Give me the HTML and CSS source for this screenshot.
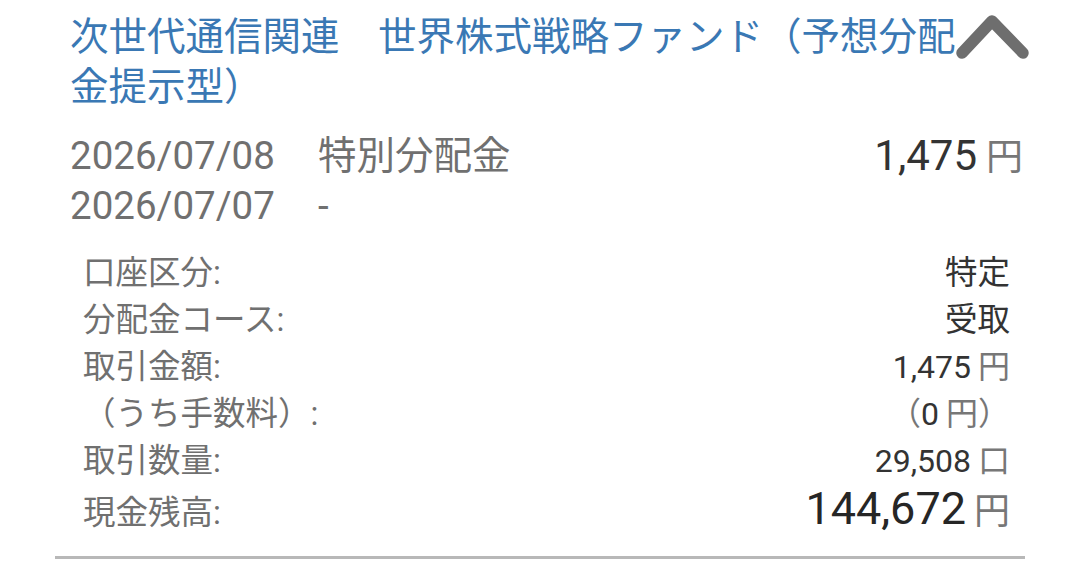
FILE: index.html
```html
<!DOCTYPE html>
<html lang="ja">
<head>
<meta charset="utf-8">
<title>分配金履歴</title>
<link rel="stylesheet" href="styles.css">
</head>
<body>
  <section class="item">
    <h2 class="fund-name">次世代通信関連　世界株式戦略ファンド（予想分配金提示型）</h2>
    <button class="toggle" type="button" aria-label="閉じる">
      <svg viewBox="0 0 80 55" width="80" height="55">
        <path d="M11 44 L41 12 L72 44" fill="none" stroke="#6e6e6e" stroke-width="11.5" stroke-linecap="round" stroke-linejoin="round"/>
      </svg>
    </button>

    <div class="summary">
      <span class="date">2026/07/08</span>
      <span class="kind">特別分配金</span>
      <span class="amount">1,475<span class="unit">円</span></span>
      <span class="date">2026/07/07</span>
      <span class="kind">-</span>
      <span></span>
    </div>

    <dl class="details">
      <div class="row"><dt>口座区分:</dt><dd>特定</dd></div>
      <div class="row"><dt>分配金コース:</dt><dd>受取</dd></div>
      <div class="row"><dt>取引金額:</dt><dd class="num">1,475<span class="unit">円</span></dd></div>
      <div class="row"><dt>（うち手数料）:</dt><dd class="num"><span class="paren">（</span>0<span class="unit">円</span><span class="paren">）</span></dd></div>
      <div class="row"><dt>取引数量:</dt><dd class="num">29,508<span class="unit">口</span></dd></div>
      <div class="row"><dt>現金残高:</dt><dd class="num big">144,672<span class="unit">円</span></dd></div>
    </dl>
  </section>
</body>
</html>
```

FILE: styles.css
```css
html, body {
  margin: 0;
  padding: 0;
  background: #ffffff;
}

body {
  font-family: Roboto, "Noto Sans CJK JP", sans-serif;
  color: #707070;
  width: 1080px;
  height: 570px;
  overflow: hidden;
}

.item {
  position: relative;
  margin: 0 55px;
  padding: 12px 2px 24px 15px;
  border-bottom: 3px solid #b8b8b8;
}

.fund-name {
  margin: 0;
  width: 900px;
  font-size: 38.5px;
  font-weight: 400;
  line-height: 50px;
  color: #3a78b4;
}

.toggle {
  position: absolute;
  top: 9px;
  right: -6px;
  padding: 0;
  border: 0;
  background: transparent;
  line-height: 0;
}

.summary {
  display: grid;
  grid-template-columns: auto auto 1fr;
  column-gap: 43px;
  margin-top: 20px;
  font-size: 38.5px;
  line-height: 48px;
  color: #707070;
}

.summary .amount {
  justify-self: end;
  color: #333333;
  font-size: 42px;
}

.unit {
  color: #777777;
  margin-left: 9px;
}

.summary .unit {
  font-size: 37px;
}

.details {
  margin: 20px 13px 0 13px;
  font-size: 32.5px;
}

.row {
  display: flex;
  justify-content: space-between;
  align-items: baseline;
  height: 47px;
  line-height: 47px;
}

.row dt {
  color: #707070;
}

.row dd {
  margin: 0;
  color: #333333;
}

.row dd .unit {
  margin-left: 7px;
}

.row dd .paren {
  color: #777777;
}

.row dd.num {
  font-size: 32px;
}

.row dd.big {
  font-size: 45px;
  color: #262626;
}

.row dd.big .unit {
  font-size: 36px;
  margin-left: 8px;
}
```
